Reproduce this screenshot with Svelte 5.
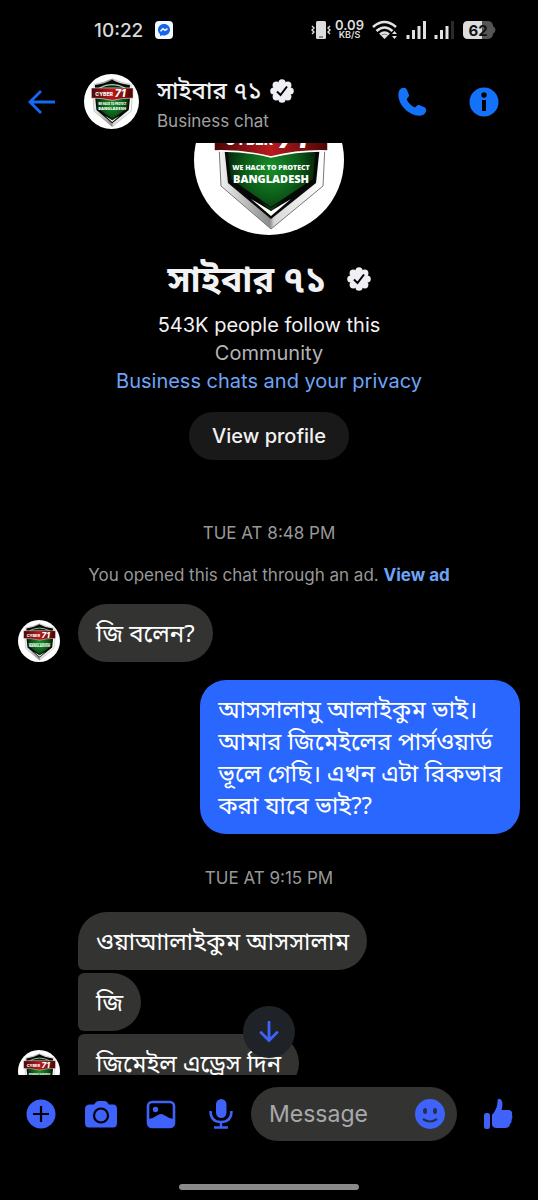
<script lang="ts">
	type Message = { text: string; mine?: boolean };
	type Group = { time: string; notice?: boolean; runs: Message[][] };

	const groups: Group[] = [
		{
			time: 'TUE AT 8:48 PM',
			notice: true,
			runs: [
				[{ text: 'জি বলেন?' }],
				[
					{
						text: 'আসসালামু আলাইকুম ভাই।\nআমার জিমেইলের পার্সওয়ার্ড\nভূলে গেছি। এখন এটা রিকভার\nকরা যাবে ভাই??',
						mine: true
					}
				]
			]
		},
		{
			time: 'TUE AT 9:15 PM',
			runs: [[{ text: 'ওয়াআালাইকুম আসসালাম' }, { text: 'জি' }, { text: 'জিমেইল এড্রেস দিন' }]]
		}
	];

	let draft = $state('');
</script>

{#snippet logo()}
	<svg class="logo" viewBox="0 0 150 150" aria-hidden="true">
		<defs>
			<radialGradient id="green" cx="50%" cy="60%" r="55%">
				<stop offset="0" stop-color="#16902a" />
				<stop offset="0.55" stop-color="#0c5c19" />
				<stop offset="1" stop-color="#021b06" />
			</radialGradient>
			<linearGradient id="red" x1="0" x2="1" y1="0" y2="0">
				<stop offset="0" stop-color="#4a0607" />
				<stop offset="0.5" stop-color="#b81a1c" />
				<stop offset="1" stop-color="#4a0607" />
			</linearGradient>
			<linearGradient id="steel" x1="0" x2="1" y1="0" y2="0">
				<stop offset="0" stop-color="#f4f4f4" />
				<stop offset="0.48" stop-color="#8b8b8b" />
				<stop offset="0.52" stop-color="#d8d8d8" />
				<stop offset="1" stop-color="#ffffff" />
			</linearGradient>
		</defs>
		<circle cx="75" cy="75" r="75" fill="#fff" />
		<path d="M28 28 Q52 25 77 13 Q102 25 128 28 L131 60 L129 101 L77 144 L27 101 L25 60 Z" fill="url(#steel)" stroke="#777" />
		<path d="M30 30 Q55 28 77 16 Q99 28 125 30 L126 60 L122 98 L77 134 L34 98 L30 60 Z" fill="#050805" />
		<path d="M35 35 Q57 31 77 23 Q98 31 120 35 L122 60 L119 94 L77 122 L37 94 L33 60 Z" fill="url(#green)" />
		<path d="M42 38 Q77 20 112 38" fill="none" stroke="#b9c8bb" stroke-width="3" />
		<path d="M57 114 L77 126 L97 114 L77 131 Z" fill="#fff" />
		<path d="M66 116 L77 123 L88 116 L77 126 Z" fill="#0a3c11" />
		<path d="M20 38 H134 V66 Q105 65 77 72 Q49 65 20 66 Z" fill="url(#red)" stroke="#fff" stroke-width="1.500" />
		<text x="31" y="60" font-size="14" class="brand">CYBER</text>
		<text x="84" y="63" font-size="29" class="brand slanted">71</text>
		<text x="77" y="85" font-size="7" class="motto">WE HACK TO PROTECT</text>
		<text x="77" y="98" font-size="11" class="motto">BANGLADESH</text>
	</svg>
{/snippet}

{#snippet verified()}
	<svg class="verified" viewBox="0 0 24 24" role="img" aria-label="Verified">
		<g fill="#f0f0f4">
			<circle cx="12" cy="12" r="9" />
			<circle cx="12" cy="3.8" r="3.6" />
			<circle cx="17.8" cy="6.2" r="3.6" />
			<circle cx="20.2" cy="12" r="3.6" />
			<circle cx="17.8" cy="17.8" r="3.6" />
			<circle cx="12" cy="20.2" r="3.6" />
			<circle cx="6.2" cy="17.8" r="3.6" />
			<circle cx="3.8" cy="12" r="3.6" />
			<circle cx="6.2" cy="6.2" r="3.6" />
		</g>
		<path d="M7 12.500 L10.500 16 L17 7.500" fill="none" stroke="#000" stroke-width="2" />
	</svg>
{/snippet}

<div class="screen">
	<div class="status">
		<span class="clock">10:22</span>
		<svg width="18" height="18" viewBox="0 0 18 18">
			<rect width="18" height="18" rx="4" fill="#f4f8ff" />
			<path d="M9 3 C5.5 3 3 5.5 3 8.7 C3 10.5 3.8 12 5 13 V15 L7 14.2 C11 15.4 15 12.7 15 8.7 C15 5.5 12.5 3 9 3 Z" fill="#1467e8" />
			<path d="M5.5 10.3 L8 7.7 L10 9.3 L12.5 7.7" fill="none" stroke="#fff" stroke-width="1.4" />
		</svg>
		<div class="indicators">
			<div class="traffic">
				<svg width="20" height="20" viewBox="0 0 20 20">
					<rect x="5" y="1" width="10" height="18" rx="1.5" fill="#ddd" />
					<path d="M8 17 H12" stroke="#333" />
					<path d="M1 6 L3 8 L1 10 L3 12 L1 14 M19 6 L17 8 L19 10 L17 12 L19 14" fill="none" stroke="#ddd" stroke-width="1.4" />
				</svg>
				<span class="speed"><b>0.09</b><small>KB/S</small></span>
			</div>
			<svg width="26" height="20" viewBox="0 0 26 20">
				<g fill="none" stroke="#e2e2e2" stroke-width="2.6">
					<path d="M1 7 Q12.500 -3 24 7" />
					<path d="M4.500 11 Q12.500 4 20.500 11" />
					<path d="M8 14.500 Q12.500 10.500 17 14.500" />
				</g>
				<path d="M9 15.500 Q12.500 13 16 15.500 L12.500 19 Z M20 14 L22.500 11 L25 14 Z M20 16 L22.500 19 L25 16 Z" fill="#e2e2e2" />
			</svg>
			<svg width="20" height="20" viewBox="0 0 20 20">
				<path d="M2 19 V15 M7.500 19 V10 M13 19 V6 M18.500 19 V1" stroke="#e2e2e2" stroke-width="3" />
			</svg>
			<svg width="20" height="20" viewBox="0 0 20 20">
				<path d="M2 19 V15 M7.500 19 V10 M13 19 V6" stroke="#e2e2e2" stroke-width="3" />
				<path d="M18.500 19 V1" stroke="#2a2a2a" stroke-width="3" />
			</svg>
			<svg width="34" height="20" viewBox="0 0 34 20">
				<rect x="1" y="1" width="30" height="18" rx="5" fill="#555" />
				<path d="M31 6 Q36 10 31 14 Z" fill="#555" />
				<path d="M6 1 H20 V19 H6 Q1 19 1 14 V6 Q1 1 6 1 Z" fill="#ddd" />
				<text x="16" y="16" class="charge">62</text>
			</svg>
		</div>
	</div>

	<header>
		<button class="icon back" aria-label="Back">
			<svg width="28" height="26" viewBox="0 0 28 26">
				<path d="M13 2 L2 13 L13 24 M2.500 13 H27" fill="none" stroke="#1769f2" stroke-width="2.8" />
			</svg>
		</button>
		<div class="avatar">{@render logo()}</div>
		<div class="who">
			<h1>সাইবার ৭১ {@render verified()}</h1>
			<p>Business chat</p>
		</div>
		<button class="icon call" aria-label="Call">
			<svg width="30" height="30" viewBox="0 0 30 30">
				<path d="M2 4 C4 0 9 0 10 3 L12 8 C12.600 10 9 11 10 13 C11.500 16 14 18.500 17 20 C19 21 20 17.400 22 18 L27 20 C30 21 30 26 26 28 C14 32 -2 16 2 4 Z" fill="#1472fa" />
			</svg>
		</button>
		<button class="icon info" aria-label="Chat info">
			<svg width="30" height="30" viewBox="0 0 30 30">
				<circle cx="15" cy="15" r="14.500" fill="#1472fa" />
				<circle cx="15" cy="8" r="2.700" fill="#000" />
				<path d="M13 13 H17 V24 H13 Z" fill="#000" />
			</svg>
		</button>
	</header>

	<main>
		<section class="intro">
			<div class="portrait">{@render logo()}</div>
			<h2>সাইবার ৭১ {@render verified()}</h2>
			<p class="followers">543K people follow this</p>
			<p class="kind">Community</p>
			<a href="#privacy">Business chats and your privacy</a>
			<button class="profile">View profile</button>
		</section>

		{#each groups as group}
			<section class="group">
				<time>{group.time}</time>
				{#if group.notice}
					<p class="notice">You opened this chat through an ad. <a href="#ad">View ad</a></p>
				{/if}
				{#each group.runs as run}
					<div class="run" class:mine={run[0].mine}>
						{#if !run[0].mine}
							<div class="sender">{@render logo()}</div>
						{/if}
						<div class="bubbles">
							{#each run as message}
								<p class="bubble">{message.text}</p>
							{/each}
						</div>
					</div>
				{/each}
			</section>
		{/each}

		<button class="jump" aria-label="Scroll to latest">
			<svg width="20" height="22" viewBox="0 0 20 22">
				<path d="M10 1 V19 M2 11.500 L10 19.500 L18 11.500" fill="none" stroke="#3e62fa" stroke-width="2.800" stroke-linecap="round" />
			</svg>
		</button>
	</main>

	<form class="composer" onsubmit={(e) => e.preventDefault()}>
		<button type="button" class="icon" aria-label="More">
			<svg width="30" height="30" viewBox="0 0 30 30">
				<circle cx="15" cy="15" r="14.500" fill="#3e62fa" />
				<path d="M15 7 V23 M7 15 H23" stroke="#000" stroke-width="2.200" />
			</svg>
		</button>
		<button type="button" class="icon" aria-label="Camera">
			<svg width="32" height="30" viewBox="0 0 32 30">
				<path d="M5 5.500 H9 Q11 2 13 2 H20 Q22 2 24 5.500 H28 Q32 5.500 32 10 V24 Q32 28.500 28 28.500 H4 Q0 28.500 0 24 V10 Q0 5.500 5 5.500 Z" fill="#3e62fa" />
				<circle cx="16" cy="16.500" r="7" fill="#3e62fa" stroke="#000" stroke-width="2.200" />
			</svg>
		</button>
		<button type="button" class="icon" aria-label="Gallery">
			<svg width="30" height="30" viewBox="0 0 30 30">
				<rect x="2" y="3" width="26" height="25" rx="4" fill="#000" stroke="#3e62fa" stroke-width="2.600" />
				<circle cx="9.500" cy="10.500" r="2.700" fill="#3e62fa" />
				<path d="M2 20 Q8 19 12 16 Q15 14 18 16 Q22 19 28 20 V25 Q28 28 25 28 H5 Q2 28 2 25 Z" fill="#3e62fa" />
			</svg>
		</button>
		<button type="button" class="icon" aria-label="Voice message">
			<svg width="24" height="30" viewBox="0 0 24 30">
				<rect x="7" y="0" width="10.500" height="19" rx="5.200" fill="#3e62fa" />
				<path d="M1.500 12 Q1.500 23 12 23 Q22.500 23 22.500 12 M12 23 V28 M5 28.500 H19" fill="none" stroke="#3e62fa" stroke-width="2.500" />
			</svg>
		</button>
		<div class="field">
			<input type="text" placeholder="Message" aria-label="Message" bind:value={draft} />
			<button type="button" class="emoji" aria-label="Emoji">
				<svg width="30" height="30" viewBox="0 0 30 30">
					<circle cx="15" cy="15" r="15" fill="#3e62fa" />
					<ellipse cx="10" cy="12" rx="2" ry="3" fill="#22304f" />
					<ellipse cx="20" cy="12" rx="2" ry="3" fill="#22304f" />
					<path d="M8 20 Q15 25 22 20" fill="none" stroke="#22304f" stroke-width="2.200" />
				</svg>
			</button>
		</div>
		<button type="button" class="icon like" aria-label="Like">
			<svg width="30" height="32" viewBox="0 0 30 32">
				<rect x="1" y="15" width="6" height="16" rx="2.500" fill="#3e62fa" />
				<path d="M9 17 Q15 10 14.500 3 Q14.500 0 17 1 C20 2 20 8 18.500 12 H26 Q30 13 29 17 Q30 20 28.500 22 Q29 25 27 26 Q26.500 30 22 30 H14 Q9 30 9 26 Z" fill="#3e62fa" />
			</svg>
		</button>
	</form>
	<div class="home"></div>
</div>

<style>
	:global(body) {
		background: #000;
		margin: 0;
	}

	.screen {
		background: #000;
		color: #f2f2f4;
		display: flex;
		flex-direction: column;
		font-family: Inter, 'Noto Sans Bengali', 'Noto Sans', sans-serif;
		height: 100vh;
		overflow: hidden;
	}

	h1,
	h2,
	p {
		margin: 0;
	}

	button {
		background: none;
		border: 0;
		color: inherit;
		font: inherit;
		padding: 0;
	}

	a {
		text-decoration: none;
	}

	svg {
		display: block;
		flex: none;
	}

	.status {
		align-items: center;
		display: flex;
		flex: none;
		gap: 12px;
		height: 60px;
		padding: 0 42px 0 94px;
	}

	.clock {
		color: #d8d8d8;
		font-size: 19px;
		font-weight: 500;
	}

	.indicators {
		align-items: center;
		display: flex;
		gap: 8px;
		margin-left: auto;
	}

	.traffic {
		align-items: center;
		display: flex;
		gap: 4px;
	}

	.speed {
		align-items: center;
		color: #ddd;
		display: flex;
		flex-direction: column;
		font-size: 13px;
		line-height: 10px;

		& b {
			font-weight: 600;
		}

		& small {
			font-size: 9px;
			font-weight: 600;
		}
	}

	.charge {
		fill: #111;
		font-size: 15px;
		font-weight: 700;
		text-anchor: middle;
	}

	header {
		align-items: center;
		display: flex;
		flex: none;
		height: 83px;
	}

	.icon {
		align-items: center;
		display: flex;
		flex: none;
		justify-content: center;
		width: 60px;
	}

	.back {
		width: 84px;
	}

	.avatar {
		flex: none;
		width: 55px;
	}

	.logo {
		width: 100%;
	}

	.brand {
		fill: #fff;
		font-family: Inter, sans-serif;
		font-weight: 800;
	}

	.slanted {
		font-style: italic;
	}

	.motto {
		fill: #fff;
		font-family: 'Open Sans', sans-serif;
		font-weight: 800;
		text-anchor: middle;
	}

	.who {
		flex: 1;
		line-height: 30px;
		padding: 8px 0 0 18px;

		& p {
			color: #a0a0a2;
			font-size: 17px;
		}
	}

	h1 {
		align-items: center;
		display: flex;
		font-size: 24px;
		font-weight: 500;
		gap: 8px;
		height: 30px;

		& :global(.verified) {
			width: 24px;
		}
	}

	.call {
		width: 72px;
	}

	.info {
		margin-right: 18px;
		width: 72px;
	}

	main {
		flex: 1;
		min-height: 0;
		overflow: hidden;
		position: relative;
	}

	.intro {
		align-items: center;
		display: flex;
		flex-direction: column;
		font-size: 20px;
		line-height: 28px;

		& a {
			color: #6ea4f8;
		}
	}

	/* the chat is scrolled part way past the portrait */
	.portrait {
		align-items: flex-end;
		display: flex;
		height: 92px;
		overflow: hidden;
		width: 150px;
	}

	h2 {
		align-items: center;
		display: flex;
		font-size: 36px;
		font-weight: 700;
		gap: 20px;
		line-height: 48px;
		margin: 20px 0 8px;

		& :global(.verified) {
			width: 24px;
		}
	}

	.kind {
		color: #b4b4b6;
	}

	.profile {
		background: #191919;
		border-radius: 24px;
		font-weight: 500;
		height: 48px;
		margin-top: 17px;
		padding: 0 23px;
	}

	.group {
		display: flex;
		flex-direction: column;
		padding: 0 18px;
	}

	time {
		color: #98989a;
		font-size: 17px;
		line-height: 24px;
		margin-top: 61px;
		text-align: center;

		.group + .group & {
			margin-top: 32px;
		}
	}

	.notice {
		color: #98989a;
		font-size: 17px;
		line-height: 24px;
		margin-top: 18px;
		text-align: center;

		& a {
			color: #6ea4f8;
			font-weight: 700;
		}
	}

	.run {
		align-items: flex-end;
		display: flex;
		gap: 18px;
		margin-top: 18px;
	}

	.notice + .run {
		margin-top: 17px;
	}

	time + .run {
		margin-top: 22px;
	}

	.sender {
		flex: none;
		width: 42px;
	}

	.bubbles {
		align-items: flex-start;
		display: flex;
		flex-direction: column;
		gap: 3px;
	}

	.bubble {
		background: #333432;
		border-radius: 6px 29px 29px 6px;
		color: #fff;
		font-family: 'Noto Sans', 'Noto Sans Bengali', sans-serif;
		font-size: 24px;
		line-height: 32px;
		padding: 13px 18px;
		white-space: pre-line;

		&:first-child {
			border-top-left-radius: 29px;
		}

		&:only-child {
			border-bottom-left-radius: 29px;
		}
	}

	.mine {
		justify-content: flex-end;

		& .bubble:only-child {
			background: #2a67fe;
			border-radius: 26px;
		}
	}

	.jump {
		align-items: center;
		background: #1f2226;
		border-radius: 50%;
		bottom: 17px;
		display: flex;
		height: 52px;
		justify-content: center;
		left: calc(50% - 26px);
		position: absolute;
		width: 52px;
	}

	.composer {
		align-items: center;
		display: flex;
		flex: none;
		height: 77px;
		padding-left: 11px;
	}

	.field {
		align-items: center;
		background: #333432;
		border-radius: 27px;
		display: flex;
		flex: 1;
		height: 54px;
		min-width: 0;
		padding: 0 12px 0 18px;
	}

	input {
		background: none;
		border: 0;
		color: #fff;
		flex: 1;
		font: inherit;
		font-size: 23px;
		min-width: 0;
		outline: 0;
		padding: 0;

		&::placeholder {
			color: #a9a9ab;
		}
	}

	.like {
		width: 81px;
	}

	.home {
		align-self: center;
		background: #8a8a8a;
		border-radius: 3px;
		flex: none;
		height: 6px;
		margin: 32px 0 10px;
		width: 180px;
	}
</style>
